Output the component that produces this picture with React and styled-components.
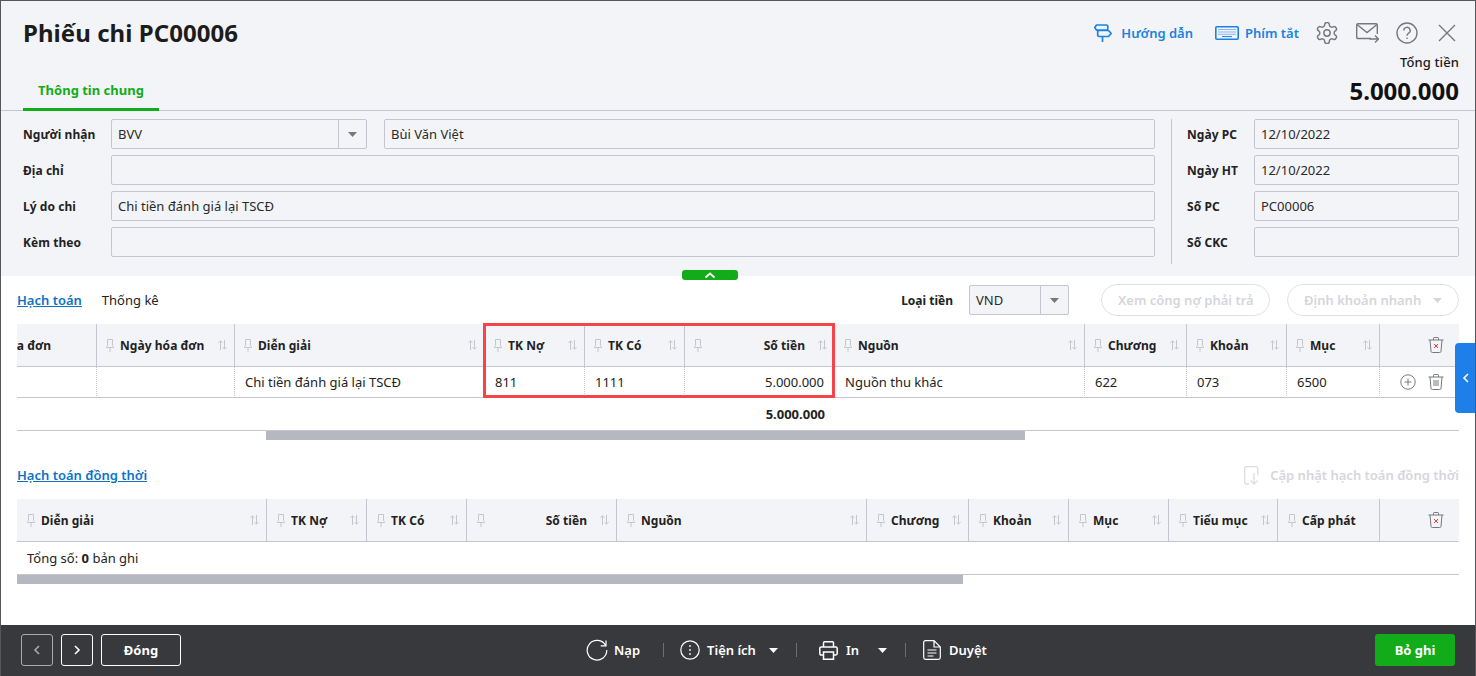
import React from 'react';
import styled, { createGlobalStyle } from 'styled-components';

const BORDER = '#c5c6d0';

const GlobalStyle = createGlobalStyle`
  html, body { margin: 0; padding: 0; height: 100%; }
  body { font-family: 'Noto Sans', 'Liberation Sans', sans-serif; font-size: 13px; color: #1a1a1a; overflow: hidden; }
  * { box-sizing: border-box; }
`;

// Small drawn icons
const Pin = () => (
  <svg width="8" height="13" viewBox="0 0 8 13" fill="none" stroke="#c4c6cc" strokeWidth="1">
    <path d="M1.5 .5h5v6.2l1 1v.8h-7v-.8l1-1zM4 8.5V13" />
  </svg>
);

const Sort = () => (
  <svg width="9" height="10" viewBox="0 0 9 10" fill="none" stroke="#c4c6cc" strokeWidth="1">
    <path d="M2.5 10V.8M.5 2.8l2-2 2 2M6.5 0v9.2M4.5 7.2l2 2 2-2" />
  </svg>
);

const Caret = ({ color = '#77787d' }) => (
  <svg width="9" height="5" viewBox="0 0 9 5"><path d="M0 0h9L4.5 5z" fill={color} /></svg>
);

const Trash = ({ cross }) => (
  <svg width="16" height="16" viewBox="0 0 16 16" fill="none" stroke="#77787d" strokeWidth="1">
    <path d="M.5 3h15M5.5 3V1.2q0-.7.7-.7h3.6q.7 0 .7.7V3M2 3l1 11.3q.1 1.2 1.3 1.2h7.4q1.2 0 1.3-1.2L14 3" />
    {cross ? (
      <path d="M6 7l4 4M10 7l-4 4" stroke="#ee3d3d" />
    ) : (
      <path d="M6 6v6M8 6v6M10 6v6" />
    )}
  </svg>
);

const Signpost = () => (
  <svg width="18" height="18" viewBox="0 0 18 18" fill="none" stroke="#1a82e0" strokeWidth="1.7" strokeLinejoin="round">
    <path d="M2.500 1h10q1.300 0 1.300 1.300v2.500q0 1.300-1.300 1.300h-10L.8 3.500zM4 6.500h10.500l2.700 3-2.700 3H5q-1.300 0-1.300-1.300V7.800q0-1.300 1.300-1.300zM8.500 12.500V18" />
  </svg>
);

const KeyboardIcon = () => (
  <svg width="24" height="14" viewBox="0 0 24 14" fill="none">
    <rect x=".8" y=".8" width="22.4" height="12.4" rx="1" stroke="#1a82e0" strokeWidth="1.6" />
    <path d="M3.500 3.500h17M3.500 6h17M3.500 8.300h17" stroke="#1a82e0" strokeWidth="1" strokeDasharray="1 1" />
    <path d="M7 10.600h10" stroke="#1a82e0" strokeWidth="1" />
  </svg>
);

const Gear = () => (
  <svg width="22" height="22" viewBox="1.500 1.500 21 21" fill="none" stroke="#77787d" strokeWidth="1.400" strokeLinejoin="round">
    <path d="M12.220 2h-.44a2 2 0 0 0-2 2v.18a2 2 0 0 1-1 1.730l-.43.25a2 2 0 0 1-2 0l-.15-.08a2 2 0 0 0-2.730.73l-.22.38a2 2 0 0 0 .73 2.730l.15.1a2 2 0 0 1 1 1.720v.51a2 2 0 0 1-1 1.740l-.15.09a2 2 0 0 0-.73 2.730l.22.38a2 2 0 0 0 2.730.73l.15-.08a2 2 0 0 1 2 0l.43.25a2 2 0 0 1 1 1.730V20a2 2 0 0 0 2 2h.44a2 2 0 0 0 2-2v-.18a2 2 0 0 1 1-1.730l.43-.25a2 2 0 0 1 2 0l.15.08a2 2 0 0 0 2.730-.73l.22-.39a2 2 0 0 0-.73-2.730l-.15-.08a2 2 0 0 1-1-1.740v-.5a2 2 0 0 1 1-1.740l.15-.09a2 2 0 0 0 .73-2.730l-.22-.38a2 2 0 0 0-2.730-.73l-.15.08a2 2 0 0 1-2 0l-.43-.25a2 2 0 0 1-1-1.730V4a2 2 0 0 0-2-2z" />
    <circle cx="12" cy="12" r="3" />
  </svg>
);

const MailSend = () => (
  <svg width="23" height="20" viewBox="0 0 23 20" fill="none" stroke="#77787d" strokeWidth="1.400">
    <path d="M15 15.500H2q-1.300 0-1.300-1.300V2q0-1.300 1.300-1.300h18q1.300 0 1.300 1.300v9" />
    <path d="M1 1.500l10 8 10-8M13.500 16h9M19 12.500l3.500 3.500-3.500 3.500" />
  </svg>
);

const Help = () => (
  <svg width="22" height="22" viewBox="0 0 22 22" fill="none" stroke="#77787d" strokeWidth="1.400">
    <circle cx="11" cy="11" r="10" />
    <path d="M7.800 8.500a3.200 3.200 0 1 1 4.600 2.900q-1.400.7-1.400 2.300M11 15.500v1.600" />
  </svg>
);

const Close = () => (
  <svg width="18" height="18" viewBox="0 0 18 18" fill="none" stroke="#77787d" strokeWidth="1.400">
    <path d="M1 1l16 16M17 1L1 17" />
  </svg>
);

const AddCircle = () => (
  <svg width="16" height="16" viewBox="0 0 16 16" fill="none" stroke="#77787d" strokeWidth="1">
    <circle cx="8" cy="8" r="7.200" />
    <path d="M8 4.600v6.800M4.600 8h6.800" />
  </svg>
);

const ImportDoc = () => (
  <svg width="16" height="19" viewBox="0 0 16 19" fill="none" stroke="#dcdde1" strokeWidth="1.300">
    <path d="M5 18H2.500q-1.800 0-1.800-1.800V2.500Q.7.7 2.500.7h9.500q1.800 0 1.800 1.800V9M10 7v11M6.500 14.500L10 18l3.500-3.500" />
  </svg>
);

const Reload = () => (
  <svg width="22" height="22" viewBox="0 0 22 22" fill="none" stroke="#fff" strokeWidth="1.200">
    <path d="M19.600 6.500A9.800 9.800 0 1 0 20.800 11M20 1.500v5.300h-5.300" />
  </svg>
);

const InfoDots = () => (
  <svg width="20" height="20" viewBox="0 0 20 20" fill="none" stroke="#fff" strokeWidth="1.200">
    <circle cx="10" cy="10" r="9.200" />
    <path d="M10 5.200v1.600M10 9.200v1.600M10 13.200v1.600" strokeWidth="1.700" />
  </svg>
);

const PrinterIcon = () => (
  <svg width="19" height="19" viewBox="0 0 19 19" fill="none" stroke="#fff" strokeWidth="1.500">
    <path d="M4.500 6V1.800q0-1 1-1h8q1 0 1 1V6M4.500 14H2.200q-1.400 0-1.400-1.400V7.400Q.8 6 2.200 6h14.600q1.400 0 1.400 1.400v5.200q0 1.400-1.400 1.400h-2.300" />
    <path d="M4.500 11h10v7.200h-10z" />
  </svg>
);

const DocIcon = () => (
  <svg width="18" height="20" viewBox="0 0 18 20" fill="none" stroke="#fff" strokeWidth="1.200">
    <path d="M11 .7H2.500Q.7.700.7 2.500v15q0 1.800 1.800 1.800h13q1.800 0 1.800-1.800V7zM11 .7V7h6.300M4.500 10h9M4.500 13h9M4.500 16h6" />
  </svg>
);

const Frame = styled.div`
  height: 100vh;
  display: flex;
  flex-direction: column;
  border: 1px solid #55565a;
  border-bottom: 0;
  background: #fff;
  position: relative;
  overflow: hidden;
`;

const TopArea = styled.div`
  background: #f3f4f8;
  height: 275px;
  position: relative;
  flex: none;
`;

const Header = styled.header`
  height: 110px;
  border-bottom: 1px solid ${BORDER};
  display: flex;
  justify-content: space-between;
  padding: 0 16px 0 22px;
`;

const TitleColumn = styled.div`
  display: flex;
  flex-direction: column;
  justify-content: space-between;
  padding-top: 15px;
`;

const Title = styled.h1`
  margin: 0;
  font-size: 24px;
  line-height: 33px;
  font-weight: 700;
  letter-spacing: 0.05px;
  color: #1c1c1c;
`;

const ActiveTab = styled.div`
  width: 136px;
  height: 35px;
  padding-top: 4px;
  text-align: center;
  font-weight: 700;
  font-size: 13px;
  line-height: 20px;
  color: #12ab1a;
  border-bottom: 3px solid #12ab1a;
  margin-bottom: -1px;
`;

const HeaderRight = styled.div`
  display: flex;
  flex-direction: column;
  align-items: flex-end;
`;

const ActionBar = styled.div`
  display: flex;
  align-items: center;
  height: 22px;
  margin-top: 21px;
`;

const HeaderLink = styled.a`
  display: flex;
  align-items: center;
  gap: ${(p) => p.$gap}px;
  color: #1a82e0;
  font-weight: 600;
  font-size: 13px;
  margin-right: ${(p) => p.$after}px;
`;

const IconSlot = styled.span`
  display: flex;
  margin-right: ${(p) => p.$after || 0}px;
`;

const TotalLabel = styled.div`
  margin-top: 9px;
  font-size: 13px;
  line-height: 18px;
  font-weight: 500;
  letter-spacing: 0.1px;
`;

const TotalValue = styled.div`
  font-size: 24px;
  line-height: 32px;
  font-weight: 700;
  color: #111;
  margin-top: 4px;
`;

const FormArea = styled.div`
  display: flex;
  padding: 8px 16px 0 22px;
`;

const FormMain = styled.div`
  flex: 1;
  display: flex;
  flex-direction: column;
  gap: 6px;
`;

const FormSide = styled.div`
  width: 288px;
  margin-left: 16px;
  padding-left: 15px;
  border-left: 1px solid ${BORDER};
  padding-bottom: 7px;
  display: flex;
  flex-direction: column;
  gap: 6px;
`;

const FormRow = styled.div`
  display: flex;
  align-items: center;
  height: 30px;
`;

const FieldLabel = styled.label`
  width: ${(p) => p.$width}px;
  flex: none;
  font-weight: 700;
  font-size: 12px;
  letter-spacing: 0.05px;
  color: #222;
`;

const Field = styled.div`
  flex: 1;
  height: 30px;
  padding: 0 6px;
  display: flex;
  align-items: center;
  border: 1px solid ${BORDER};
  border-radius: 2px;
  background: #f3f4f8;
  font-size: 13px;
  color: #2a2a2a;
`;

const ComboBox = styled.div`
  width: ${(p) => p.$width}px;
  flex: none;
  height: 30px;
  margin-right: ${(p) => p.$after || 0}px;
  display: flex;
  border: 1px solid ${BORDER};
  border-radius: 2px;
  background: #f3f4f8;
  font-size: 13px;
  color: #2a2a2a;
`;

const ComboText = styled.div`
  flex: 1;
  padding-left: 6px;
  display: flex;
  align-items: center;
`;

const ComboArrow = styled.div`
  width: 28px;
  display: flex;
  align-items: center;
  justify-content: center;
  border-left: 1px solid ${BORDER};
`;

const CollapseHandle = styled.div`
  position: absolute;
  left: 681px;
  top: 269px;
  width: 56px;
  height: 10px;
  background: #12ab1a;
  border-radius: 3px;
  display: flex;
  align-items: center;
  justify-content: center;
  z-index: 2;
`;

const Main = styled.main`
  flex: 1;
  padding: 0 16px;
  display: flex;
  flex-direction: column;
`;

const Toolbar = styled.div`
  height: 48px;
  display: flex;
  align-items: center;
`;

const TabLink = styled.a`
  font-size: 13px;
  color: #0e72c4;
  font-weight: 600;
  text-decoration: underline;
  margin-right: 20px;
`;

const PlainTab = styled.span`
  font-size: 13px;
  color: #222;
`;

const MoneyLabel = styled.span`
  margin-left: auto;
  margin-right: 16px;
  font-weight: 700;
  font-size: 12px;
  color: #222;
`;

const GhostButton = styled.div`
  width: ${(p) => p.$width}px;
  height: 32px;
  margin-left: ${(p) => p.$before}px;
  padding: 0 16px;
  border: 1px solid #e0e1e6;
  border-radius: 16px;
  display: flex;
  align-items: center;
  justify-content: space-between;
  color: #d5d6db;
  font-weight: 600;
  font-size: 13px;
  white-space: nowrap;
`;

const TableWrap = styled.div`
  position: relative;
`;

const GridRow = styled.div`
  display: grid;
  grid-template-columns: ${(p) => p.$cols};
`;

const HeadCell = styled.div`
  height: 43px;
  background: #f3f4f8;
  border-right: 1px solid ${(p) => (p.$last ? 'transparent' : BORDER)};
  border-bottom: 1px solid ${BORDER};
  display: flex;
  align-items: center;
  justify-content: ${(p) => (p.$clip ? 'flex-end' : 'flex-start')};
  padding: 0 7px 0 ${(p) => p.$inset || 9}px;
  overflow: hidden;
  white-space: nowrap;
  font-weight: 700;
  font-size: 12px;
  letter-spacing: 0.05px;
  color: #222;
`;

const HeadLabel = styled.span`
  margin-left: 6px;
  flex: ${(p) => (p.$clip ? 'none' : 1)};
  text-align: ${(p) => (p.$right ? 'right' : 'left')};
  padding-right: ${(p) => (p.$right ? 13 : p.$clip ? 38 : 0)}px;
`;

const IconHead = styled(HeadCell)`
  justify-content: flex-end;
  padding: 0 14px 0 0;
`;

const BodyCell = styled.div`
  height: 31px;
  border-right: 1px dotted ${(p) => (p.$last ? 'transparent' : BORDER)};
  border-bottom: 1px solid ${BORDER};
  padding: 0 10px;
  display: flex;
  align-items: center;
  justify-content: ${(p) => (p.$right ? 'flex-end' : 'flex-start')};
  font-size: 13px;
  color: #222;
  white-space: nowrap;
  gap: 12px;
`;

const ActionCell = styled(BodyCell)`
  justify-content: flex-end;
  padding: 0 14px 0 0;
`;

const TotalRow = styled.div`
  height: 33px;
  border-bottom: 1px solid ${BORDER};
  display: flex;
  align-items: center;
  padding-left: 715px;
  font-weight: 700;
  font-size: 13px;
  color: #222;
  width: 100%;
`;

const TotalCell = styled.span`
  width: 93px;
  text-align: right;
`;

const ScrollTrack = styled.div`
  height: 9px;
  flex: none;
`;

const ScrollThumb = styled.div`
  height: 9px;
  margin-left: ${(p) => p.$left}px;
  width: ${(p) => p.$width}px;
  background: #b5b8c0;
`;

const Highlight = styled.div`
  position: absolute;
  left: 466px;
  top: -1px;
  width: 352px;
  height: 75px;
  border: 3px solid #f4444a;
  pointer-events: none;
`;

const SectionBar = styled.div`
  height: 59px;
  padding-top: 11px;
  display: flex;
  justify-content: space-between;
  align-items: center;
`;

const SectionLink = styled(TabLink)`
  margin: 0;
`;

const DisabledAction = styled.div`
  display: flex;
  align-items: center;
  gap: 10px;
  color: #d5d6db;
  font-weight: 600;
  font-size: 13px;
`;

const SummaryRow = styled.div`
  height: 33px;
  border-bottom: 1px solid ${BORDER};
  display: flex;
  align-items: center;
  padding-left: 10px;
  font-size: 13px;
  color: #222;
`;

const SideTab = styled.div`
  position: absolute;
  right: -1px;
  top: 342px;
  width: 21px;
  height: 70px;
  background: #1f7fe8;
  border-radius: 4px 0 0 4px;
  display: flex;
  align-items: center;
  justify-content: center;
  z-index: 3;
`;

const Footer = styled.footer`
  height: 51px;
  flex: none;
  background: #38393d;
  display: flex;
  align-items: center;
  padding: 0 20px 1px;
`;

const NavButton = styled.div`
  width: ${(p) => p.$width || 32}px;
  height: 32px;
  margin-right: 8px;
  border: 1px solid ${(p) => (p.$dim ? '#a8a9ad' : '#fff')};
  border-radius: 3px;
  display: flex;
  align-items: center;
  justify-content: center;
  color: #fff;
  font-weight: 700;
  font-size: 13px;
`;

const FooterTools = styled.div`
  display: flex;
  align-items: center;
  margin-left: 397px;
  color: #fff;
  font-weight: 600;
  font-size: 13px;
`;

const ToolItem = styled.div`
  display: flex;
  align-items: center;
  gap: ${(p) => p.$gap}px;
`;

const ToolCaret = styled.span`
  display: flex;
  margin-left: ${(p) => p.$before}px;
`;

const ToolDivider = styled.span`
  width: 1px;
  height: 14px;
  background: #6d6e72;
  margin: 0 ${(p) => p.$right}px 0 ${(p) => p.$left}px;
`;

const SaveButton = styled.div`
  margin-left: auto;
  width: 80px;
  height: 32px;
  background: #12ab1a;
  border-radius: 3px;
  display: flex;
  align-items: center;
  justify-content: center;
  color: #fff;
  font-weight: 700;
  font-size: 13px;
`;

const Chevron = ({ d, color = '#fff', size = 12, weight = 1.6 }) => (
  <svg width={size} height={size} viewBox="0 0 12 12" fill="none" stroke={color} strokeWidth={weight}>
    <path d={d} />
  </svg>
);

const mainCols = '80px 138px 250px 100px 100px 150px 250px 102px 100px 93px 79px';
const mainHeads = [
  { label: 'Số hóa đơn', clip: true },
  { label: 'Ngày hóa đơn' },
  { label: 'Diễn giải' },
  { label: 'TK Nợ' },
  { label: 'TK Có' },
  { label: 'Số tiền', right: true },
  { label: 'Nguồn' },
  { label: 'Chương' },
  { label: 'Khoản' },
  { label: 'Mục' },
];
const mainRow = ['', '', 'Chi tiền đánh giá lại TSCĐ', '811', '1111', '5.000.000', 'Nguồn thu khác', '622', '073', '6500'];

const subCols = '250px 100px 100px 150px 250px 102px 100px 100px 109px 102px 79px';
const subHeads = [
  { label: 'Diễn giải' },
  { label: 'TK Nợ' },
  { label: 'TK Có' },
  { label: 'Số tiền', right: true },
  { label: 'Nguồn' },
  { label: 'Chương' },
  { label: 'Khoản' },
  { label: 'Mục' },
  { label: 'Tiểu mục' },
  { label: 'Cấp phát', noSort: true },
];

const HeadRow = ({ cols, heads, inset }) => (
  <GridRow $cols={cols}>
    {heads.map((h) => (
      <HeadCell key={h.label} $clip={h.clip} $inset={inset}>
        {!h.clip && <Pin />}
        <HeadLabel $right={h.right} $clip={h.clip}>{h.label}</HeadLabel>
        {!h.noSort && <Sort />}
      </HeadCell>
    ))}
    <IconHead $last><Trash cross /></IconHead>
  </GridRow>
);

const App = () => (
  <>
    <GlobalStyle />
    <Frame>
      <TopArea>
        <Header>
          <TitleColumn>
            <Title>Phiếu chi PC00006</Title>
            <ActiveTab>Thông tin chung</ActiveTab>
          </TitleColumn>
          <HeaderRight>
            <ActionBar>
              <HeaderLink $gap={9} $after={22}><Signpost />Hướng dẫn</HeaderLink>
              <HeaderLink $gap={6} $after={17}><KeyboardIcon />Phím tắt</HeaderLink>
              <IconSlot $after={18}><Gear /></IconSlot>
              <IconSlot $after={17}><MailSend /></IconSlot>
              <IconSlot $after={20}><Help /></IconSlot>
              <IconSlot $after={3}><Close /></IconSlot>
            </ActionBar>
            <TotalLabel>Tổng tiền</TotalLabel>
            <TotalValue>5.000.000</TotalValue>
          </HeaderRight>
        </Header>
        <FormArea>
          <FormMain>
            <FormRow>
              <FieldLabel $width={88}>Người nhận</FieldLabel>
              <ComboBox $width={256} $after={17}>
                <ComboText>BVV</ComboText>
                <ComboArrow><Caret /></ComboArrow>
              </ComboBox>
              <Field>Bùi Văn Việt</Field>
            </FormRow>
            <FormRow><FieldLabel $width={88}>Địa chỉ</FieldLabel><Field /></FormRow>
            <FormRow><FieldLabel $width={88}>Lý do chi</FieldLabel><Field>Chi tiền đánh giá lại TSCĐ</Field></FormRow>
            <FormRow><FieldLabel $width={88}>Kèm theo</FieldLabel><Field /></FormRow>
          </FormMain>
          <FormSide>
            <FormRow><FieldLabel $width={67}>Ngày PC</FieldLabel><Field>12/10/2022</Field></FormRow>
            <FormRow><FieldLabel $width={67}>Ngày HT</FieldLabel><Field>12/10/2022</Field></FormRow>
            <FormRow><FieldLabel $width={67}>Số PC</FieldLabel><Field>PC00006</Field></FormRow>
            <FormRow><FieldLabel $width={67}>Số CKC</FieldLabel><Field /></FormRow>
          </FormSide>
        </FormArea>
        <CollapseHandle><Chevron d="M1.500 8.500L6 4.500l4.500 4" size={12} weight={1.8} /></CollapseHandle>
      </TopArea>

      <Main>
        <Toolbar>
          <TabLink>Hạch toán</TabLink>
          <PlainTab>Thống kê</PlainTab>
          <MoneyLabel>Loại tiền</MoneyLabel>
          <ComboBox $width={100}>
            <ComboText>VND</ComboText>
            <ComboArrow><Caret /></ComboArrow>
          </ComboBox>
          <GhostButton $width={169} $before={32}>Xem công nợ phải trả</GhostButton>
          <GhostButton $width={172} $before={17}>Định khoản nhanh <Caret color="#d5d6db" /></GhostButton>
        </Toolbar>

        <TableWrap>
          <HeadRow cols={mainCols} heads={mainHeads} />
          <GridRow $cols={mainCols}>
            {mainRow.map((text, i) => (
              <BodyCell key={i} $right={i === 5}>{text}</BodyCell>
            ))}
            <ActionCell $last><AddCircle /><Trash /></ActionCell>
          </GridRow>
          <TotalRow><TotalCell>5.000.000</TotalCell></TotalRow>
          <ScrollTrack><ScrollThumb $left={249} $width={759} /></ScrollTrack>
          <Highlight />
        </TableWrap>

        <SectionBar>
          <SectionLink>Hạch toán đồng thời</SectionLink>
          <DisabledAction><ImportDoc />Cập nhật hạch toán đồng thời</DisabledAction>
        </SectionBar>

        <TableWrap>
          <HeadRow cols={subCols} heads={subHeads} inset={10} />
          <SummaryRow><span>Tổng số: <b>0</b> bản ghi</span></SummaryRow>
          <ScrollTrack><ScrollThumb $left={0} $width={946} /></ScrollTrack>
        </TableWrap>
      </Main>

      <SideTab><Chevron d="M8 2L4 6l4 4" /></SideTab>

      <Footer>
        <NavButton $dim><Chevron d="M8 2L4 6l4 4" color="#a8a9ad" /></NavButton>
        <NavButton><Chevron d="M4 2l4 4-4 4" /></NavButton>
        <NavButton $width={80}>Đóng</NavButton>
        <FooterTools>
          <ToolItem $gap={6}><Reload />Nạp</ToolItem>
          <ToolDivider $left={23} $right={16} />
          <ToolItem $gap={7}><InfoDots />Tiện ích</ToolItem>
          <ToolCaret $before={13}><Caret color="#fff" /></ToolCaret>
          <ToolDivider $left={18} $right={22} />
          <ToolItem $gap={8}><PrinterIcon />In</ToolItem>
          <ToolCaret $before={19}><Caret color="#fff" /></ToolCaret>
          <ToolDivider $left={18} $right={17} />
          <ToolItem $gap={8}><DocIcon />Duyệt</ToolItem>
        </FooterTools>
        <SaveButton>Bỏ ghi</SaveButton>
      </Footer>
    </Frame>
  </>
);

export default App;
